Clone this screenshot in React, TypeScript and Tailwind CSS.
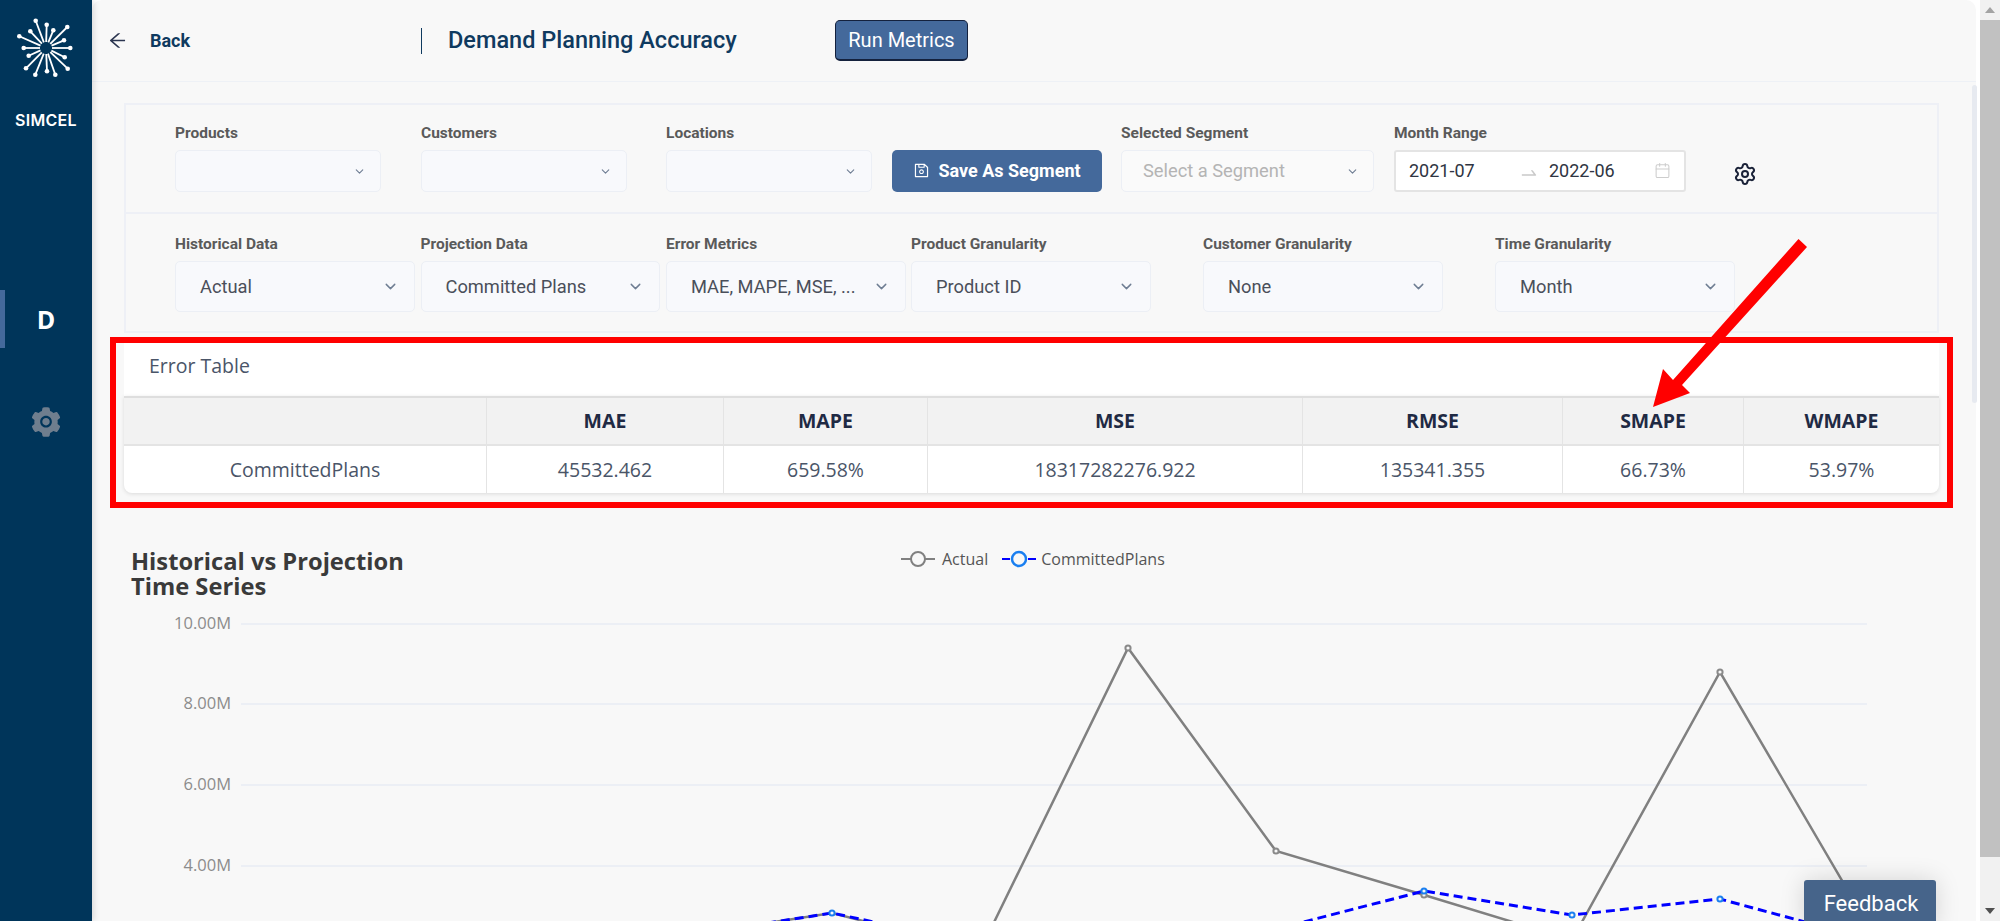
import { ChevronDown, Calendar, Settings } from "lucide-react";
import {
  AiFillSetting,
  AiOutlineArrowLeft,
  AiOutlineSave,
  AiOutlineSwapRight,
} from "react-icons/ai";

const spokes = [
  [-10.3, -27.3], [0.7, -23.3], [7.3, -17.7], [21.3, -21],
  [18, -7.7], [24.3, 0], [18.7, 9.3], [21.7, 20.7],
  [9.3, 26.7], [1, 23.3], [-10.7, 26.7], [-20, 20.3],
  [-17.3, 7.7], [-22.3, 0], [-26.7, -11.7], [-15.7, -16.7],
];

const columns = [
  { title: "", value: "CommittedPlans", width: "w-[363px]" },
  { title: "MAE", value: "45532.462", width: "w-[237px]" },
  { title: "MAPE", value: "659.58%", width: "w-[204px]" },
  { title: "MSE", value: "18317282276.922", width: "w-[375px]" },
  { title: "RMSE", value: "135341.355", width: "w-[260px]" },
  { title: "SMAPE", value: "66.73%", width: "w-[181px]" },
  { title: "WMAPE", value: "53.97%", width: "w-[195px]" },
];

const granularity = [
  { label: "Historical Data", value: "Actual", cls: "" },
  { label: "Projection Data", value: "Committed Plans", cls: "ml-[6px]" },
  { label: "Error Metrics", value: "MAE, MAPE, MSE, ...", cls: "ml-[6px]" },
  { label: "Product Granularity", value: "Product ID", cls: "ml-[5.5px]" },
  { label: "Customer Granularity", value: "None", cls: "ml-[52.5px]" },
  { label: "Time Granularity", value: "Month", cls: "ml-[52.5px]" },
];

const gridLines = [
  { y: 624, label: "10.00M" },
  { y: 704, label: "8.00M" },
  { y: 785, label: "6.00M" },
  { y: 866, label: "4.00M" },
];

const actual = "684,936 832,913 980,951 1128,648 1276,851 1424,895 1572,940 1720,672 1868,925";
const committed = "684,936 832,913 980,945 1128,960 1276,929 1424,891 1572,915 1720,899 1868,939";

const Logo = () => (
  <svg viewBox="-30 -30 60 60" className="h-[60px] w-[60px]">
    {spokes.map(([x, y]) => {
      const len = Math.hypot(x, y);
      return (
        <g key={`${x}${y}`}>
          <line x1={(x / len) * 6} y1={(y / len) * 6} x2={x} y2={y} stroke="#fff" strokeWidth="1.8" />
          <circle cx={x} cy={y} r="2.3" fill="#fff" />
        </g>
      );
    })}
  </svg>
);

const Label = ({ children }: { children: React.ReactNode }) => (
  <div className="mb-[7px] h-[20px] whitespace-nowrap text-[15.5px] font-bold leading-[20px] text-[#5a5a5a]">
    {children}
  </div>
);

const SmallSelect = ({ label, width = "w-[206px]", className = "" }: { label: string; width?: string; className?: string }) => (
  <div className={`${width} ${className}`}>
    <Label>{label}</Label>
    <div className="flex h-[42px] items-center justify-end rounded-[5px] border border-[#eceff5] bg-[#f8f9fc] pr-[14px]">
      <ChevronDown size={13} className="text-[#6f7e93]" />
    </div>
  </div>
);

const Sidebar = () => (
  <aside className="z-10 flex w-[92px] flex-none flex-col items-center bg-[#00355a] shadow-[2px_0_6px_rgba(0,0,0,0.12)]">
    <div className="mt-[18px]">
      <Logo />
    </div>
    <div className="mt-[34px] h-[16px] font-['Inter',sans-serif] text-[16px] font-semibold leading-[16px] tracking-[0.3px] text-white">
      SIMCEL
    </div>
    <div className="relative mt-[162px] flex h-[58px] w-full items-center justify-center">
      <div className="absolute left-0 top-0 h-full w-[5px] bg-[#44699b]" />
      <span className="font-['Open_Sans',sans-serif] text-[25px] font-bold leading-none text-white">D</span>
    </div>
    <AiFillSetting size={34} className="mt-[57px] text-[#6f7e8e]" />
  </aside>
);

const Header = () => (
  <header className="flex h-[82px] flex-none items-center border-b border-[#eef1f6] font-['Roboto',sans-serif]">
    <div className="flex w-[329px] items-center pl-[15px]">
      <AiOutlineArrowLeft size={21} className="text-[#2b3550]" />
      <span className="ml-[22px] text-[18px] font-bold text-[#0f3a5f]">Back</span>
    </div>
    <div className="flex h-[26px] w-[414px] items-center border-l border-[#0f3a5f] pl-[26px]">
      <span className="whitespace-nowrap text-[23.5px] font-medium text-[#0f3a5f]">Demand Planning Accuracy</span>
    </div>
    <button className="flex h-[41px] w-[133px] items-center justify-center rounded-[5px] border border-b-2 border-[#14213d] bg-[#44699b] text-[20px] text-white">
      Run Metrics
    </button>
  </header>
);

const Filters = () => (
  <div className="ml-[32px] mt-[21px] w-[1815px] border-2 border-[#eef0f6] font-['Roboto',sans-serif]">
    <div className="flex h-[109px] items-start border-b-2 border-[#eef0f6] pl-[49px] pt-[18px]">
      <SmallSelect label="Products" />
      <SmallSelect label="Customers" className="ml-[40px]" />
      <SmallSelect label="Locations" className="ml-[39px]" />
      <button className="ml-[20px] mt-[27px] flex h-[42px] w-[210px] items-center justify-center gap-[8px] rounded-[5px] bg-[#44699b] pb-[2px] text-[18px] font-bold text-white">
        <AiOutlineSave size={17} />
        Save As Segment
      </button>
      <div className="ml-[19px] w-[253px]">
        <Label>Selected Segment</Label>
        <div className="flex h-[42px] items-center justify-between rounded-[5px] border border-[#eceff5] bg-[#fafafa] pl-[21px] pr-[14px] text-[18.3px] text-[#b4b4b4]">
          Select a Segment
          <ChevronDown size={13} className="text-[#6f7e93]" />
        </div>
      </div>
      <div className="ml-[20px] w-[292px]">
        <Label>Month Range</Label>
        <div className="flex h-[42px] items-center rounded-[3px] border-2 border-[#e4e4e4] bg-white pb-[2px] pl-[13px] text-[18px] text-[#2f3542]">
          <span className="w-[110px]">2021-07</span>
          <AiOutlineSwapRight size={20} className="mt-[6px] text-[#c9c9c9]" />
          <span className="ml-[10px] w-[105px]">2022-06</span>
          <Calendar size={17} strokeWidth={1.5} className="text-[#cdcdcd]" />
        </div>
      </div>
      <Settings size={24} strokeWidth={2} className="ml-[47px] mt-[39px] text-[#1a2238]" />
    </div>
    <div className="flex h-[117px] items-start pl-[49px] pt-[20px]">
      {granularity.map((g) => (
        <div key={g.label} className={`w-[239.5px] ${g.cls}`}>
          <Label>{g.label}</Label>
          <div className="flex h-[51px] items-center justify-between rounded-[5px] border border-[#eceff5] bg-[#f8f9fc] pl-[24px] pr-[15px] text-[18.3px] text-[#4a4f5a]">
            <span className="whitespace-nowrap">{g.value}</span>
            <ChevronDown size={17} className="text-[#6f7e93]" />
          </div>
        </div>
      ))}
    </div>
  </div>
);

const ErrorTable = () => (
  <div className="ml-[32px] mt-[10px] w-[1815px] font-['Open_Sans',sans-serif]">
    <div className="flex h-[53px] items-start bg-white pl-[25px] pt-[8px] text-[19.5px] text-[#4a5568]">Error Table</div>
    <div className="flex overflow-hidden rounded-b-[8px] border-t-2 border-[#dedede] bg-white shadow-[0_1px_4px_rgba(0,0,0,0.12)]">
      {columns.map((c, i) => (
        <div key={c.value} className={`${c.width} flex-none ${i < columns.length - 1 ? "border-r border-[#e4e4e4]" : ""}`}>
          <div className="flex h-[48px] items-center justify-center border-b-2 border-[#e4e4e4] bg-[#f2f2f2] text-[19.5px] font-bold text-[#1f2a44]">
            {c.title}
          </div>
          <div className="flex h-[47px] items-center justify-center text-[19.5px] text-[#4a5568]">{c.value}</div>
        </div>
      ))}
    </div>
  </div>
);

const Chart = () => (
  <div className="ml-[32px] font-['Open_Sans',sans-serif]">
    <div className="flex h-[117px] items-start pt-[56px]">
      <h2 className="ml-[7px] w-[300px] text-[23.7px] font-bold leading-[25px] text-[#3a3a3a]">
        Historical vs Projection
        <br />
        Time Series
      </h2>
      <div className="-mt-[2px] ml-[470px] flex items-center text-[16px] text-[#555]">
        <svg width="34" height="18" viewBox="0 0 34 18" className="mr-[7px]">
          <line x1="0" y1="9" x2="34" y2="9" stroke="#808080" strokeWidth="2" />
          <circle cx="17" cy="9" r="7" fill="#f8f8f8" stroke="#808080" strokeWidth="2" />
        </svg>
        Actual
        <svg width="34" height="18" viewBox="0 0 34 18" className="ml-[14px] mr-[5px]">
          <line x1="0" y1="9" x2="34" y2="9" stroke="#0000ff" strokeWidth="2" strokeDasharray="8 5" />
          <circle cx="17" cy="9" r="7" fill="#f8f8f8" stroke="#1a7ff0" strokeWidth="2.5" />
        </svg>
        CommittedPlans
      </div>
    </div>
    <svg viewBox="124 610 1815 311" className="block h-[311px] w-[1815px]">
      {gridLines.map((g) => (
        <g key={g.y}>
          <line x1="241" x2="1867" y1={g.y} y2={g.y} stroke="#e9edf5" strokeWidth="1.5" />
          <text x="231" y={g.y + 5} textAnchor="end" fontSize="16.5" fill="#8c8c8c">
            {g.label}
          </text>
        </g>
      ))}
      <polyline points={actual} fill="none" stroke="#808080" strokeWidth="2.5" />
      <polyline points={committed} fill="none" stroke="#0000ff" strokeWidth="3" strokeDasharray="9 5" />
      {[[1128, 648], [1276, 851], [1424, 895], [1720, 672]].map(([x, y]) => (
        <circle key={x} cx={x} cy={y} r="2.6" fill="#f8f8f8" stroke="#8a8a8a" strokeWidth="2" />
      ))}
      {[[832, 913], [1424, 891], [1572, 915], [1720, 899]].map(([x, y]) => (
        <circle key={x} cx={x} cy={y} r="2.6" fill="#f8f8f8" stroke="#1a7ff0" strokeWidth="2" />
      ))}
    </svg>
  </div>
);

const Scrollbar = () => (
  <div className="flex w-[20px] flex-none flex-col items-center bg-[#f1f1f1]">
    <div className="flex h-[20px] items-center justify-center">
      <div className="h-0 w-0 border-x-[5px] border-b-[6px] border-x-transparent border-b-[#a3a3a3]" />
    </div>
    <div className="h-[837px] w-full bg-[#c1c1c1]" />
    <div className="mt-auto flex h-[20px] items-center justify-center">
      <div className="h-0 w-0 border-x-[5px] border-t-[6px] border-x-transparent border-t-[#505050]" />
    </div>
  </div>
);

export default function App() {
  return (
    <div className="relative flex h-[921px] w-[2000px] overflow-hidden bg-white">
      <Sidebar />
      <main className="flex h-full w-[1884px] flex-none flex-col rounded-tl-[10px] rounded-tr-[10px] bg-[#f8f8f8]">
        <Header />
        <Filters />
        <ErrorTable />
        <Chart />
      </main>
      <div className="w-[4px] flex-none bg-white" />
      <Scrollbar />

      {/* inner scrollbar thumb */}
      <div className="absolute left-[1972px] top-[85px] h-[318px] w-[5px] rounded-full bg-[#e7eaf0]" />

      {/* annotation over the table */}
      <div className="pointer-events-none absolute left-[110px] top-[337px] h-[171px] w-[1843px] border-[6px] border-[#ff0000]" />
      <svg className="pointer-events-none absolute left-0 top-0" width="2000" height="921">
        <polygon points="1798.5,239 1807,247 1682,385 1690,393 1653,407 1663,369 1673,380" fill="#ff0000" />
      </svg>

      <button className="absolute -bottom-[7px] left-[1804px] flex h-[48px] w-[132px] items-start justify-center rounded-t-[3px] bg-[#46648a] pl-[2px] pt-[10px] font-['Roboto',sans-serif] text-[22px] leading-[28px] text-white shadow-[0_0_24px_rgba(0,0,0,0.15)]">
        Feedback
      </button>
    </div>
  );
}
